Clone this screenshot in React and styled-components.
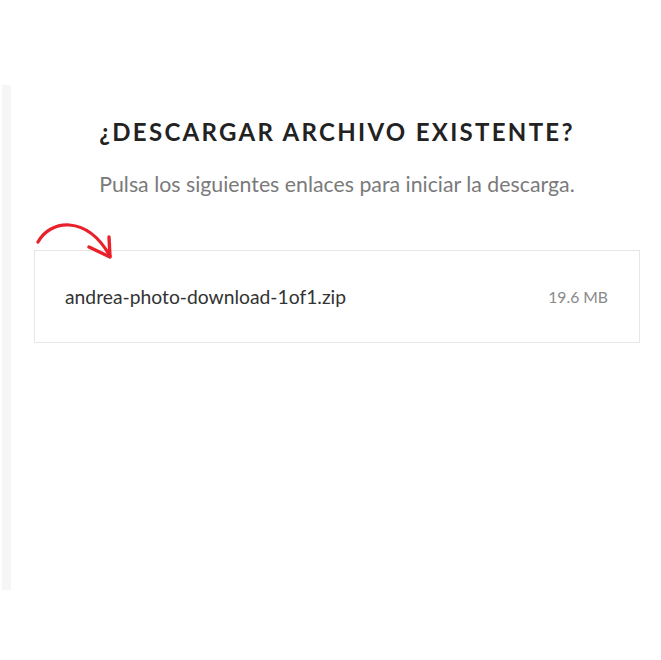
import React from 'react';
import styled, { createGlobalStyle } from 'styled-components';

const GlobalStyle = createGlobalStyle`
  html, body {
    margin: 0;
    padding: 0;
    background: #fff;
  }
  body {
    font-family: Lato, 'Open Sans', sans-serif;
  }
`;

const Page = styled.div`
  width: 661px;
  height: 660px;
  display: flex;
  flex-direction: row;
  background: #fff;
  overflow: hidden;
`;

const SideStrip = styled.div`
  width: 9px;
  height: 505px;
  margin-top: 85px;
  margin-left: 2px;
  background: #f6f6f6;
  flex-shrink: 0;
`;

const Main = styled.div`
  flex: 1;
  display: flex;
  flex-direction: column;
  align-items: center;
  padding: 117px 21px 0 23px;
`;

const Title = styled.h2`
  margin: 0;
  font-family: Lato, sans-serif;
  font-size: 24px;
  font-weight: 700;
  letter-spacing: 2.3px;
  line-height: 30px;
  color: #222;
  text-align: center;
`;

const Subtitle = styled.p`
  margin: 24px 0 0 0;
  font-family: Lato, sans-serif;
  font-size: 21.3px;
  font-weight: 400;
  line-height: 26px;
  color: #7a7a7a;
  text-align: center;
`;

const FileArea = styled.div`
  position: relative;
  width: 100%;
  margin-top: 53px;
`;

const FileRow = styled.a`
  box-sizing: border-box;
  width: 100%;
  height: 93px;
  display: flex;
  align-items: center;
  justify-content: space-between;
  padding: 0 31px 0 30px;
  border: 1.5px solid #e6e6e6;
  text-decoration: none;
  cursor: pointer;
`;

const FileName = styled.span`
  font-family: Lato, sans-serif;
  font-size: 19.3px;
  color: #333;
`;

const FileSize = styled.span`
  font-family: Lato, sans-serif;
  font-size: 15.7px;
  color: #8a8a8a;
`;

const Arrow = styled.svg`
  position: absolute;
  left: 0;
  top: -34px;
  width: 90px;
  height: 48px;
  overflow: visible;
`;

const CurvedArrow = () => (
  <Arrow viewBox="0 0 90 48">
    <path
      d="M4 26 C 16 4, 52 -2, 76 40"
      fill="none"
      stroke="#e8212b"
      strokeWidth="3.2"
      strokeLinecap="round"
    />
    <path
      d="M55 31 L 76 41 L 75 21"
      fill="none"
      stroke="#e8212b"
      strokeWidth="3.4"
      strokeLinecap="round"
      strokeLinejoin="round"
    />
  </Arrow>
);

export default function App() {
  return (
    <Page>
      <GlobalStyle />
      <SideStrip />
      <Main>
        <Title>¿DESCARGAR ARCHIVO EXISTENTE?</Title>
        <Subtitle>Pulsa los siguientes enlaces para iniciar la descarga.</Subtitle>
        <FileArea>
          <CurvedArrow />
          <FileRow>
            <FileName>andrea-photo-download-1of1.zip</FileName>
            <FileSize>19.6 MB</FileSize>
          </FileRow>
        </FileArea>
      </Main>
    </Page>
  );
}
